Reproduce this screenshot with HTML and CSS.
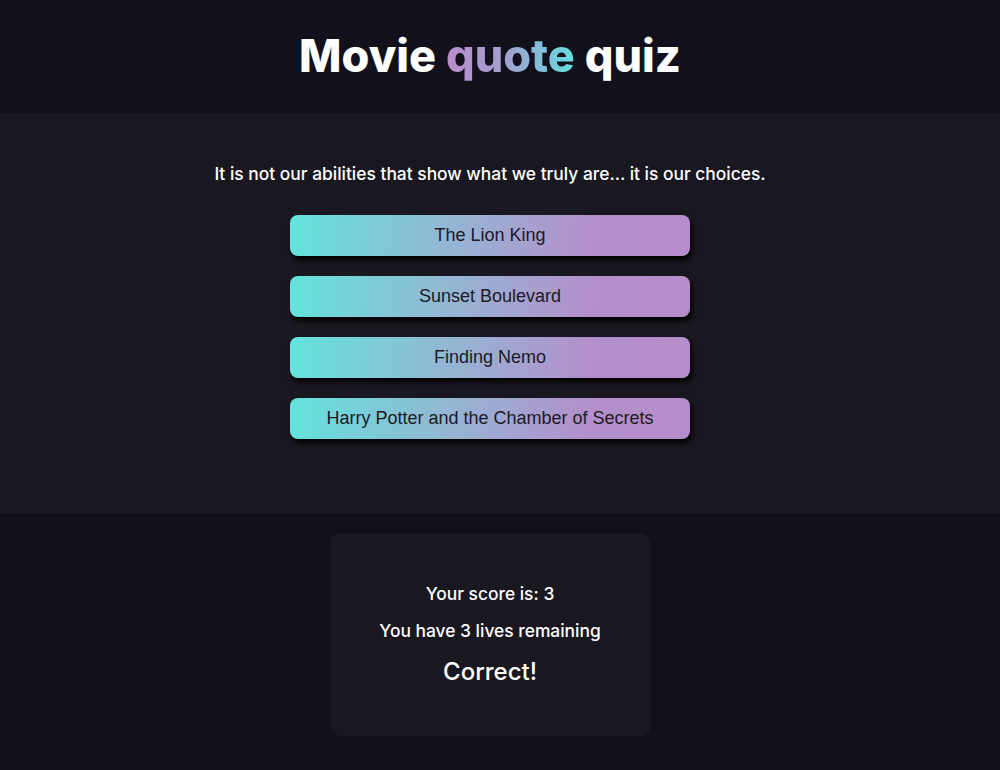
FILE: index.html
```html
<!DOCTYPE html>
<html lang="en">
<head>
<meta charset="utf-8">
<title>Movie quote quiz</title>
<link rel="stylesheet" href="styles.css">
</head>
<body>
<header class="header">
  <h1 class="title">Movie <span class="accent">quote</span> quiz</h1>
</header>
<main class="quiz">
  <p class="quote">It is not our abilities that show what we truly are… it is our choices.</p>
  <div class="options">
    <button class="option">The Lion King</button>
    <button class="option">Sunset Boulevard</button>
    <button class="option">Finding Nemo</button>
    <button class="option">Harry Potter and the Chamber of Secrets</button>
  </div>
</main>
<footer class="footer">
  <div class="card">
    <p class="score">Your score is: 3</p>
    <p class="lives">You have 3 lives remaining</p>
    <p class="result">Correct!</p>
  </div>
</footer>
</body>
</html>
```
FILE: styles.css
```css
html, body {
  margin: 0;
  padding: 0;
}
body {
  background: #11101b;
  color: #ffffff;
  font-family: Inter, "Noto Sans", sans-serif;
}
.header, .quiz, .footer {
  padding-right: 20px;
}
.header {
  height: 113px;
  display: flex;
  align-items: center;
  justify-content: center;
  background: #11101b;
}
.title {
  margin: 0;
  font-size: 45px;
  font-weight: 800;
  line-height: 1;
  padding-bottom: 2px;
}
.accent {
  background: linear-gradient(90deg, #bb8dcb 0%, #a39fd1 45%, #64dedf 100%);
  -webkit-background-clip: text;
  background-clip: text;
  color: transparent;
}
.quiz {
  background: #19171f;
  height: 400px;
  box-sizing: border-box;
  padding-top: 50px;
  display: flex;
  flex-direction: column;
  align-items: center;
}
.quote {
  margin: 0 0 30px;
  font-size: 17.4px;
  font-weight: 500;
  line-height: 22px;
}
.options {
  display: flex;
  flex-direction: column;
  gap: 20px;
  width: 400px;
}
.option {
  height: 41px;
  border: none;
  border-radius: 8px;
  background: linear-gradient(100deg, #62e4de 0%, #94b6d4 40%, #b48fcb 75%, #b58dca 100%);
  box-shadow: 2px 4px 4px rgba(0, 0, 0, 0.9);
  color: #1b1a24;
  font-family: "Liberation Sans", Arial, sans-serif;
  font-size: 18px;
  padding: 0;
  cursor: pointer;
}
.footer {
  display: flex;
  justify-content: center;
  padding-top: 20px;
}
.card {
  width: 321px;
  height: 203px;
  box-sizing: border-box;
  background: #19171f;
  border-radius: 10px;
  display: flex;
  flex-direction: column;
  align-items: center;
  padding-top: 50px;
}
.score, .lives {
  margin: 0 0 15px;
  font-size: 17.4px;
  font-weight: 500;
  line-height: 22px;
}
.result {
  margin: 0;
  font-size: 24px;
  font-weight: 500;
  line-height: 30px;
}
```
